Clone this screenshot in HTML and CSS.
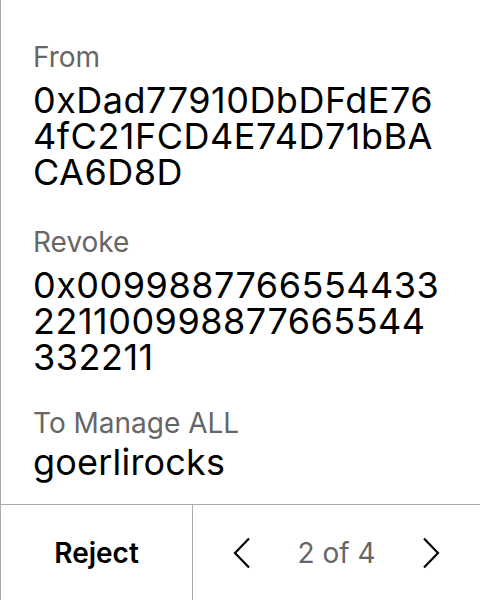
FILE: index.html
```html
<!DOCTYPE html>
<html>
<head>
<meta charset="utf-8">
<link rel="stylesheet" href="styles.css">
</head>
<body>
<div class="panel">
  <div class="details">
    <div class="field">
      <div class="label">From</div>
      <div class="value">0xDad77910DbDFdE764fC21FCD4E74D71bBACA6D8D</div>
    </div>
    <div class="field">
      <div class="label">Revoke</div>
      <div class="value">0x0099887766554433221100998877665544332211</div>
    </div>
    <div class="field field-short">
      <div class="label">To Manage ALL</div>
      <div class="value">goerlirocks</div>
    </div>
  </div>
  <div class="footer">
    <div class="reject">Reject</div>
    <div class="pager">
      <svg class="chev" width="18" height="32" viewBox="0 0 18 32"><path d="M16 1.5 L2 16 L16 30.5" fill="none" stroke="#000" stroke-width="2.2"/></svg>
      <span class="count">2 of 4</span>
      <svg class="chev" width="18" height="32" viewBox="0 0 18 32"><path d="M2 1.5 L16 16 L2 30.5" fill="none" stroke="#000" stroke-width="2.2"/></svg>
    </div>
  </div>
</div>
</body>
</html>
```

FILE: styles.css
```css
html, body {
  margin: 0;
  padding: 0;
  background: #fff;
}
body {
  font-family: Inter, "Noto Sans", sans-serif;
  color: #000;
}
.panel {
  width: 480px;
  height: 600px;
  box-sizing: border-box;
  border-left: 1px solid #aaa;
  display: flex;
  flex-direction: column;
}
.details {
  flex: 1;
  padding: 39px 33px 0 32px;
  display: flex;
  flex-direction: column;
  gap: 34px;
}
.field-short {
  margin-top: -4px;
}
.label {
  font-size: 28px;
  line-height: 36px;
  color: #666;
}
.value {
  margin-top: 7px;
  font-size: 36px;
  line-height: 36px;
  letter-spacing: 0.5px;
  word-break: break-all;
}
.field-short .value {
  margin-top: 3px;
  letter-spacing: 0.2px;
}
.footer {
  height: 96px;
  box-sizing: border-box;
  border-top: 1px solid #aaa;
  display: flex;
}
.reject {
  width: 192px;
  box-sizing: border-box;
  border-right: 1px solid #aaa;
  display: flex;
  align-items: center;
  justify-content: center;
  font-size: 28px;
  font-weight: 600;
}
.pager {
  flex: 1;
  display: flex;
  align-items: center;
  justify-content: space-between;
  padding: 0 40px 0 40px;
}
.count {
  font-size: 28px;
  color: #666;
}
.chev {
  display: block;
}
```
